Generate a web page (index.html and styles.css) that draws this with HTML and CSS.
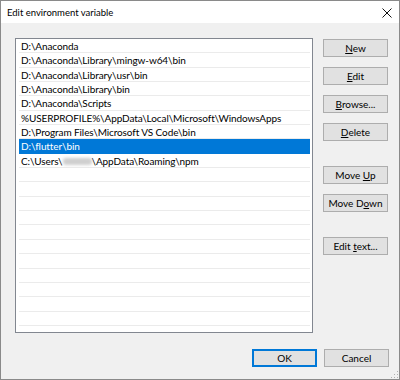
FILE: index.html
```html
<!DOCTYPE html>
<html lang="en">
<head>
    <meta charset="UTF-8">
    <title>Edit environment variable</title>
    <link rel="stylesheet" href="styles.css">
</head>
<body>
    <div class="window">
        <div class="titlebar">
            <span class="title">Edit environment variable</span>
            <svg class="close" width="10" height="10" viewBox="0 0 10 10">
                <path d="M0.5 0.5 L9.5 9.5 M9.5 0.5 L0.5 9.5" stroke="#111" stroke-width="1" fill="none"/>
            </svg>
        </div>

        <div class="content">
            <div class="main">
                <div class="list">
                    <div class="row">D:\Anaconda</div>
                    <div class="row">D:\Anaconda\Library\mingw-w64\bin</div>
                    <div class="row">D:\Anaconda\Library\usr\bin</div>
                    <div class="row">D:\Anaconda\Library\bin</div>
                    <div class="row">D:\Anaconda\Scripts</div>
                    <div class="row">%USERPROFILE%\AppData\Local\Microsoft\WindowsApps</div>
                    <div class="row">D:\Program Files\Microsoft VS Code\bin</div>
                    <div class="row selected">D:\flutter\bin</div>
                    <div class="row">C:\Users\<span class="blurred"></span>\AppData\Roaming\npm</div>
                    <div class="row"></div>
                    <div class="row"></div>
                    <div class="row"></div>
                    <div class="row"></div>
                    <div class="row"></div>
                    <div class="row"></div>
                    <div class="row"></div>
                    <div class="row"></div>
                    <div class="row"></div>
                    <div class="row"></div>
                    <div class="row"></div>
                </div>

                <div class="side">
                    <div class="group">
                        <button class="btn"><u>N</u>ew</button>
                        <button class="btn"><u>E</u>dit</button>
                        <button class="btn"><u>B</u>rowse...</button>
                        <button class="btn"><u>D</u>elete</button>
                    </div>
                    <div class="group">
                        <button class="btn">Move <u>U</u>p</button>
                        <button class="btn">Move D<u>o</u>wn</button>
                    </div>
                    <div class="group">
                        <button class="btn">Edit <u>t</u>ext...</button>
                    </div>
                </div>
            </div>

            <div class="footer">
                <button class="btn default">OK</button>
                <button class="btn">Cancel</button>
            </div>
        </div>
        <div class="grip"></div>
    </div>
</body>
</html>
```

FILE: styles.css
```css
* {
    margin: 0;
    padding: 0;
    box-sizing: border-box;
}

body {
    font-family: 'Lato', 'Liberation Sans', sans-serif;
    font-size: 10px;
    color: #000;
    background-color: #fff;
}

.window {
    position: relative;
    width: 400px;
    height: 380px;
    border: 1px solid #8a8a8a;
    background-color: #f0f0f0;
    display: flex;
    flex-direction: column;
}

.titlebar {
    height: 22px;
    background-color: #fff;
    display: flex;
    align-items: center;
    justify-content: space-between;
    padding: 0 6px 0 6px;
}

.title {
    font-size: 9.5px;
    color: #000;
}

.close {
    margin-right: 1px;
    margin-top: 1px;
}

.content {
    flex: 1;
    display: flex;
    flex-direction: column;
    padding: 15px 10px 11px 14px;
}

.main {
    display: flex;
    gap: 10px;
}

.list {
    width: 298px;
    height: 295px;
    background-color: #fff;
    border: 1px solid #828790;
    padding: 0 2px 0 3px;
    overflow: hidden;
}

.row {
    height: 14.35px;
    line-height: 14px;
    padding-left: 2px;
    border-bottom: 1px solid #ebebeb;
    white-space: nowrap;
    letter-spacing: -0.1px;
}

.row.selected {
    background-color: #0078d7;
    color: #fff;
    border-bottom-color: #0078d7;
}

.blurred {
    display: inline-block;
    width: 29px;
    height: 7px;
    margin-top: 4px;
    background-color: #cfcfcf;
    border-radius: 3px;
    filter: blur(1.5px);
    vertical-align: top;
}

.side {
    display: flex;
    flex-direction: column;
    gap: 25px;
    padding-top: 1px;
}

.group {
    display: flex;
    flex-direction: column;
    gap: 10px;
}

.btn {
    width: 65px;
    height: 18px;
    padding: 0;
    background-color: #e1e1e1;
    border: 1px solid #adadad;
    font-family: 'Lato', 'Liberation Sans', sans-serif;
    font-size: 10px;
    color: #000;
    line-height: 14px;
    white-space: nowrap;
}

.btn u {
    text-underline-offset: 1px;
}

.btn.default {
    border-color: #0078d7;
    box-shadow: inset 0 0 0 1px #0078d7;
}

.footer {
    display: flex;
    justify-content: flex-end;
    gap: 7px;
    margin-top: 16px;
}

.grip {
    position: absolute;
    right: 1px;
    bottom: 1px;
    width: 8px;
    height: 8px;
    background-image: radial-gradient(circle, #b0b0b0 0.8px, transparent 1px);
    background-size: 3px 3px;
    clip-path: polygon(100% 0, 100% 100%, 0 100%);
}
```
